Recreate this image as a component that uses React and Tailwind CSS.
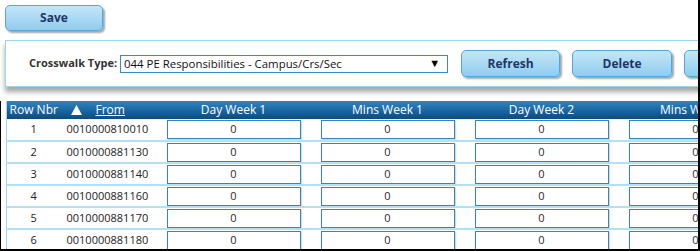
import React from 'react';

const rows = [
  ['1', '0010000810010'],
  ['2', '0010000881130'],
  ['3', '0010000881140'],
  ['4', '0010000881160'],
  ['5', '0010000881170'],
  ['6', '0010000881180'],
];

const valueCols = ['Day Week 1', 'Mins Week 1', 'Day Week 2', 'Mins Week 2'];

function BlueButton({ children, className = '' }) {
  return (
    <button
      className={`shrink-0 rounded-[5px] border border-[#4ea8da] bg-gradient-to-b from-[#c4e6f8] to-[#8fcdee] text-[12px] font-bold text-[#1e3768] shadow-[2px_2px_2px_rgba(0,0,0,0.35)] ${className}`}
    >
      {children}
    </button>
  );
}

export default function App() {
  return (
    <div className="relative h-[251px] w-[700px] overflow-hidden border-r-2 border-b-2 border-black bg-white font-['Open_Sans',sans-serif] text-[11px] text-[#222]">
      <div className="px-[5px] pt-[5px]">
        <BlueButton className="h-[26px] w-[98px]">Save</BlueButton>
      </div>

      <div className="ml-[5px] mt-[9px] flex h-[47px] w-[820px] items-center border border-[#9ad6ef] bg-white pl-[23px] shadow-[0_5px_5px_rgba(0,0,0,0.35)]">
        <span className="mr-[3px] shrink-0 whitespace-nowrap text-[11px] font-bold text-[#333]">Crosswalk Type:</span>
        <div className="flex h-[18px] w-[328px] shrink-0 items-center justify-between border border-[#3a8cc6] pl-[3px] pr-[7px] text-[11.4px] text-[#111]">
          <span className="whitespace-nowrap">044 PE Responsibilities - Campus/Crs/Sec</span>
          <span className="text-[11px] text-black">▼</span>
        </div>
        <BlueButton className="ml-[13px] h-[27px] w-[99px]">Refresh</BlueButton>
        <BlueButton className="ml-[12px] h-[27px] w-[100px]">Delete</BlueButton>
        <BlueButton className="ml-[12px] h-[27px] w-[100px]">Add</BlueButton>
      </div>

      <div className="mt-[14px] border-l border-black pl-[5px]">
        <table className="w-[766px] table-fixed border-collapse border-l border-[#9ad6ef]">
          <colgroup>
            <col className="w-[54px]" />
            <col className="w-[96px]" />
            <col className="w-[154px]" />
            <col className="w-[154px]" />
            <col className="w-[154px]" />
            <col className="w-[154px]" />
          </colgroup>
          <thead>
            <tr className="h-[17px] bg-gradient-to-b from-[#2e86c5] to-[#0b4b81] text-[12px] text-white">
              <th className="whitespace-nowrap text-center font-normal">Row Nbr</th>
              <th className="whitespace-nowrap text-left font-normal">
                <div className="flex items-center">
                  <svg width="11" height="10" viewBox="0 0 11 10" className="ml-[10px] mr-[14px]">
                    <path d="M5.5 0 L11 10 L0 10 Z" fill="white" />
                  </svg>
                  <span className="underline">From</span>
                </div>
              </th>
              {valueCols.map((c) => (
                <th key={c} className="whitespace-nowrap text-center font-normal">{c}</th>
              ))}
            </tr>
          </thead>
          <tbody>
            {rows.map(([n, from]) => (
              <tr key={n} className="h-[22px] border-b-2 border-[#b2e0f4] last:border-b-0">
                <td className="text-center">{n}</td>
                <td className="pl-[6px]">{from}</td>
                {valueCols.map((c) => (
                  <td key={c} className="px-[10px]">
                    <div className="flex h-[19px] w-[134px] items-center justify-center border border-[#2f86c2] bg-white text-[#2a2a2a] shadow-[1px_1px_1px_rgba(0,0,0,0.15)]">
                      0
                    </div>
                  </td>
                ))}
              </tr>
            ))}
          </tbody>
        </table>
      </div>
    </div>
  );
}
